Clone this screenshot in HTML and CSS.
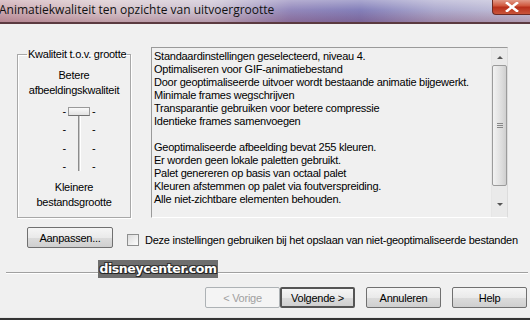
FILE: index.html
```html
<!DOCTYPE html>
<html lang="nl">
<head>
    <meta charset="UTF-8">
    <title>Animatiekwaliteit ten opzichte van uitvoergrootte</title>
    <link rel="stylesheet" href="styles.css">
</head>
<body>
    <!-- Title bar -->
    <div class="titlebar">
        <span class="title">Animatiekwaliteit ten opzichte van uitvoergrootte</span>
        <div class="close-btn">
            <svg width="14" height="10" viewBox="0 0 14 10">
                <path d="M2 1 L12 9 M12 1 L2 9" stroke="#fff" stroke-width="2.6" stroke-linecap="square"/>
            </svg>
        </div>
    </div>

    <div class="dialog">
        <div class="top-row">
            <!-- Quality group -->
            <fieldset class="group">
                <legend>Kwaliteit t.o.v. grootte</legend>
                <p class="slider-label">Betere<br>afbeeldingskwaliteit</p>
                <div class="slider">
                    <div class="ticks">
                        <span>-</span><span>-</span><span>-</span><span>-</span>
                    </div>
                    <div class="track">
                        <div class="thumb"></div>
                        <div class="line"></div>
                    </div>
                    <div class="ticks">
                        <span>-</span><span>-</span><span>-</span><span>-</span>
                    </div>
                </div>
                <p class="slider-label low">Kleinere<br>bestandsgrootte</p>
            </fieldset>

            <!-- Info box -->
            <div class="info-box">
                <div class="info-text">
                    <p>Standaardinstellingen geselecteerd, niveau 4.</p>
                    <p>Optimaliseren voor GIF-animatiebestand</p>
                    <p>Door geoptimaliseerde uitvoer wordt bestaande animatie bijgewerkt.</p>
                    <p>Minimale frames wegschrijven</p>
                    <p>Transparantie gebruiken voor betere compressie</p>
                    <p>Identieke frames samenvoegen</p>
                    <p>&nbsp;</p>
                    <p>Geoptimaliseerde afbeelding bevat 255 kleuren.</p>
                    <p>Er worden geen lokale paletten gebruikt.</p>
                    <p>Palet genereren op basis van octaal palet</p>
                    <p>Kleuren afstemmen op palet via foutverspreiding.</p>
                    <p>Alle niet-zichtbare elementen behouden.</p>
                </div>
                <div class="scrollbar">
                    <span class="arrow up"></span>
                    <div class="scroll-thumb">
                        <span class="grip"></span>
                    </div>
                    <span class="arrow down"></span>
                </div>
            </div>
        </div>

        <div class="option-row">
            <button class="btn adjust-btn">Aanpassen...</button>
            <label class="check">
                <span class="box"></span>
                Deze instellingen gebruiken bij het opslaan van niet-geoptimaliseerde bestanden
            </label>
        </div>

        <div class="separator"></div>

        <div class="footer">
            <button class="btn" disabled>&lt; Vorige</button>
            <button class="btn default">Volgende &gt;</button>
            <button class="btn spaced">Annuleren</button>
            <button class="btn spaced">Help</button>
        </div>
    </div>

    <div class="watermark">disneycenter.com</div>
    <div class="bottom-edge"></div>
</body>
</html>
```

FILE: styles.css
```css
* {
    margin: 0;
    padding: 0;
    box-sizing: border-box;
}

body {
    width: 530px;
    height: 320px;
    overflow: hidden;
    background-color: #f0f0f0;
    font-family: "Liberation Sans", Arial, sans-serif;
    font-size: 11px;
    letter-spacing: -0.25px;
    color: #000;
    position: relative;
}

/* Title bar */
.titlebar {
    height: 24px;
    display: flex;
    justify-content: space-between;
    align-items: flex-start;
    border-bottom: 2px solid #5b3a40;
    background:
        linear-gradient(to bottom, rgba(255, 255, 255, 0.35) 0%, rgba(255, 255, 255, 0.05) 45%, rgba(120, 40, 60, 0.25) 100%),
        linear-gradient(to right, #c9a4ad 0%, #d6c3c9 20%, #c9bfd0 40%, #8d82b8 55%, #7d79b6 68%, #a9a6cc 82%, #c3c1d8 100%);
}

.title {
    font-family: "Open Sans", "Noto Sans", sans-serif;
    font-size: 12px;
    letter-spacing: 0;
    line-height: 20px;
    margin-left: -1px;
    color: #111;
}

.close-btn {
    width: 38px;
    height: 16px;
    margin-top: -1px;
    display: flex;
    align-items: center;
    justify-content: center;
    border: 1px solid #6e2a22;
    border-top: none;
    border-right: none;
    border-radius: 0 0 0 4px;
    background: linear-gradient(to bottom, #e4a595 0%, #d0593f 45%, #b8301b 55%, #c9553a 100%);
}

/* Dialog body */
.dialog {
    padding: 23px 3px 0 6px;
}

.top-row {
    display: flex;
    align-items: flex-start;
}

.group {
    width: 114px;
    height: 170px;
    margin-left: 11px;
    margin-top: 1px;
    border: 1px solid #a8a8a8;
    box-shadow: 1px 1px 0 #fff, inset 1px 1px 0 #fff;
    padding: 0;
    display: flex;
    flex-direction: column;
    align-items: center;
}

.group legend {
    margin-left: 9px;
    padding: 0 1px;
    line-height: 13px;
    white-space: nowrap;
}

.slider-label {
    text-align: center;
    line-height: 15px;
    margin-top: 7px;
}

.slider-label.low {
    margin-top: 9px;
}

.slider {
    display: flex;
    gap: 2px;
    margin-top: 9px;
    margin-left: 10px;
    height: 64px;
}

.ticks {
    display: flex;
    flex-direction: column;
    justify-content: space-between;
    height: 64px;
    line-height: 9px;
}

.track {
    width: 22px;
    display: flex;
    flex-direction: column;
    align-items: center;
}

.thumb {
    width: 22px;
    height: 9px;
    border: 1px solid #9a9a9a;
    border-bottom-color: #707070;
    background: linear-gradient(to bottom, #fafafa, #e2e2e2);
}

.line {
    width: 3px;
    flex: 1;
    border-left: 1px solid #8c8c8c;
    border-right: 1px solid #fff;
    background-color: #c8c8c8;
}

/* Info text box */
.info-box {
    display: flex;
    width: 357px;
    height: 171px;
    margin-left: 20px;
    border: 1px solid #9a9a9a;
    border-right-color: #dcdcdc;
    border-bottom-color: #fff;
    background-color: #f0f0f0;
}

.info-text {
    flex: 1;
    padding: 2px 0 0 2px;
    line-height: 13px;
    white-space: nowrap;
    overflow: hidden;
}

.scrollbar {
    width: 16px;
    display: flex;
    flex-direction: column;
    align-items: center;
    border-left: 1px solid #e6e6e6;
    background-color: #eaeaea;
}

.arrow {
    width: 0;
    height: 0;
    border-left: 3px solid transparent;
    border-right: 3px solid transparent;
}

.arrow.up {
    margin: 8px 0 6px;
    border-bottom: 3px solid #555;
}

.arrow.down {
    margin-top: 17px;
    border-top: 3px solid #555;
}

.scroll-thumb {
    width: 15px;
    height: 121px;
    display: flex;
    align-items: center;
    justify-content: center;
    border: 1px solid #9b9b9b;
    border-radius: 2px;
    background: linear-gradient(to right, #f2f2f2, #dcdcdc 70%, #cfcfcf);
}

.grip {
    width: 6px;
    height: 5px;
    border-top: 1px solid #888;
    border-bottom: 1px solid #888;
    position: relative;
}

.grip::after {
    content: "";
    position: absolute;
    left: 0;
    right: 0;
    top: 1px;
    border-top: 1px solid #888;
}

/* Option row */
.option-row {
    display: flex;
    align-items: flex-start;
    margin-top: 9px;
    padding-left: 21px;
}

.btn {
    font-family: "Liberation Sans", Arial, sans-serif;
    font-size: 11px;
    letter-spacing: -0.25px;
    color: #000;
    width: 75px;
    height: 21px;
    border: 1px solid #707070;
    border-radius: 2px;
    background: linear-gradient(to bottom, #f5f5f5 0%, #eaeaea 50%, #dcdcdc 51%, #cfcfcf 100%);
}

.adjust-btn {
    width: 86px;
}

.check {
    display: flex;
    align-items: center;
    gap: 6px;
    margin-left: 14px;
    margin-top: 6px;
    line-height: 14px;
    white-space: nowrap;
}

.check .box {
    width: 12px;
    height: 12px;
    border: 1px solid #8e8f8f;
    background: linear-gradient(135deg, #dcdcdc, #fdfdfd);
}

.separator {
    margin-top: 24px;
    margin-right: -1px;
    border-top: 1px solid #a0a0a0;
    border-bottom: 1px solid #fff;
}

/* Footer buttons */
.footer {
    display: flex;
    justify-content: flex-end;
    margin-top: 13px;
}

.btn:disabled {
    color: #a0a0a0;
    border-color: #adb2b5;
    background: #f4f4f4;
}

.btn.default {
    border: 2px solid #555;
}

.btn.spaced {
    margin-left: 11px;
}

.watermark {
    position: absolute;
    left: 98px;
    top: 260px;
    width: 120px;
    height: 18px;
    background-color: #6e6e6e;
    color: #fff;
    font-family: "DejaVu Sans", sans-serif;
    font-size: 12.5px;
    font-weight: bold;
    line-height: 18px;
    text-align: center;
    letter-spacing: -0.4px;
    text-shadow: 1px 1px 0 #222, -1px -1px 0 #333, 1px -1px 0 #333, -1px 1px 0 #333;
}

.bottom-edge {
    position: absolute;
    left: 0;
    right: 0;
    bottom: 0;
    height: 3px;
    background-color: #343434;
    border-top: 1px solid #e6e6e6;
}
```
